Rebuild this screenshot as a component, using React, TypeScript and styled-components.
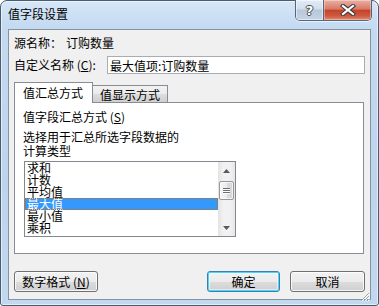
import React from "react";
import styled, { createGlobalStyle } from "styled-components";

const GlobalStyle = createGlobalStyle`
  html, body {
    margin: 0;
    padding: 0;
    background: #ffffff;
  }
  body {
    font-family: "Noto Sans CJK SC", "Noto Sans", sans-serif;
    font-size: 12px;
    color: #000;
  }
`;

const summaryTypes = ["求和", "计数", "平均值", "最大值", "最小值", "乘积"];
const selectedType = "最大值";

function ValueFieldSettings(): React.ReactElement {
    return (
        <Window>
            <TitleBar>
                <TitleText>值字段设置</TitleText>
                <CaptionButtons>
                    <HelpButton>?</HelpButton>
                    <CloseButton>
                        <svg width="16" height="12" viewBox="0 0 16 12">
                            <path d="M3 2 L13 10 M13 2 L3 10" stroke="#3a3a3a" strokeWidth="4.2" strokeLinecap="square" fill="none" />
                            <path d="M3 2 L13 10 M13 2 L3 10" stroke="#ffffff" strokeWidth="2.2" strokeLinecap="square" fill="none" />
                        </svg>
                    </CloseButton>
                </CaptionButtons>
            </TitleBar>
            <Client>
                <Row>
                    <FieldLabel $width={52}>源名称：</FieldLabel>
                    <span>订购数量</span>
                </Row>
                <Row $gap={4}>
                    <FieldLabel $width={93}>
                        自定义名称 (<Accel>C</Accel>):
                    </FieldLabel>
                    <NameInput readOnly defaultValue="最大值项:订购数量" />
                </Row>
                <Tabs>
                    <TabStrip>
                        <Tab $active $width={79}>值汇总方式</Tab>
                        <Tab $width={76}>值显示方式</Tab>
                    </TabStrip>
                    <TabPanel>
                        <SectionLabel>
                            值字段汇总方式 (<Accel>S</Accel>)
                        </SectionLabel>
                        <Hint>
                            选择用于汇总所选字段数据的
                            <br />
                            计算类型
                        </Hint>
                        <ListBox>
                            <ListItems>
                                {summaryTypes.map((t) => (
                                    <ListItem key={t} $selected={t === selectedType}>{t}</ListItem>
                                ))}
                            </ListItems>
                            <ScrollBar>
                                <ScrollArrow>
                                    <svg width="7" height="4" viewBox="0 0 7 4">
                                        <path d="M0 4 L3.5 0 L7 4 Z" fill="#5a5a5a" />
                                    </svg>
                                </ScrollArrow>
                                <ScrollThumb>
                                    <GripLine />
                                    <GripLine />
                                    <GripLine />
                                </ScrollThumb>
                                <TrackFill />
                                <ScrollArrow>
                                    <svg width="7" height="4" viewBox="0 0 7 4">
                                        <path d="M0 0 L7 0 L3.5 4 Z" fill="#5a5a5a" />
                                    </svg>
                                </ScrollArrow>
                            </ScrollBar>
                        </ListBox>
                    </TabPanel>
                </Tabs>
                <ButtonRow>
                    <PushButton $width={84}>
                        数字格式 (<Accel>N</Accel>)
                    </PushButton>
                    <Spacer />
                    <PushButton $width={73} $default>确定</PushButton>
                    <PushButton $width={75}>取消</PushButton>
                </ButtonRow>
                <SizeGrip>
                    <svg width="11" height="11" viewBox="0 0 11 11">
                        <path d="M10 2 L2 10 M10 5 L5 10 M10 8 L8 10" stroke="#ffffff" strokeWidth="1" fill="none" transform="translate(0.5 0.5)" />
                        <path d="M10 2 L2 10 M10 5 L5 10 M10 8 L8 10" stroke="#9aa3ad" strokeWidth="1" fill="none" />
                    </svg>
                </SizeGrip>
            </Client>
        </Window>
    );
}

const Window = styled.div`
    width: 379px;
    height: 306px;
    box-sizing: border-box;
    border: 1px solid #4b5c72;
    border-radius: 7px 7px 3px 3px;
    background: linear-gradient(180deg, #d6e6f7 0px, #c4daf1 26px, #bdd4ed 60%, #c2d8ef 100%);
    box-shadow: inset 0 0 0 1px rgba(255, 255, 255, 0.55);
    padding: 0 7px 5px 7px;
    display: flex;
    flex-direction: column;
`;

const TitleBar = styled.div`
    height: 28px;
    display: flex;
    align-items: flex-start;
    justify-content: space-between;
`;

const TitleText = styled.div`
    height: 26px;
    line-height: 26px;
    font-size: 12px;
    color: #000;
`;

const CaptionButtons = styled.div`
    display: flex;
    height: 20px;
    margin-top: -1px;
    margin-right: -1px;
    border: 1px solid #56667a;
    border-top: none;
    border-radius: 0 0 5px 5px;
    overflow: hidden;
    box-shadow: 0 1px 0 rgba(255, 255, 255, 0.6);
`;

const HelpButton = styled.div`
    width: 27px;
    height: 100%;
    border-right: 1px solid #56667a;
    background: linear-gradient(180deg, #e3ecf7 0%, #d0ddeb 45%, #b8c8db 50%, #c4d3e5 100%);
    box-shadow: inset 0 0 0 1px rgba(255, 255, 255, 0.5);
    display: flex;
    align-items: center;
    justify-content: center;
    font-family: "DejaVu Sans", sans-serif;
    font-weight: bold;
    font-size: 13px;
    color: #ffffff;
    text-shadow: -1px 0 #4a4a4a, 1px 0 #4a4a4a, 0 -1px #4a4a4a, 0 1px #4a4a4a;
`;

const CloseButton = styled.div`
    width: 47px;
    height: 100%;
    background: linear-gradient(180deg, #eab1a4 0%, #d97a66 45%, #c5432d 52%, #cf5a40 80%, #e08c70 100%);
    box-shadow: inset 0 0 0 1px rgba(255, 255, 255, 0.35);
    display: flex;
    align-items: center;
    justify-content: center;
`;

const Client = styled.div`
    position: relative;
    flex: 1;
    border: 1px solid #86929f;
    background: #f0f0f0;
    padding: 4px 5px 7px 5px;
    display: flex;
    flex-direction: column;
`;

const Row = styled.div<{ $gap?: number }>`
    display: flex;
    align-items: center;
    height: 18px;
    margin-top: ${(p) => p.$gap ?? 0}px;
    line-height: 14px;
`;

const FieldLabel = styled.span<{ $width: number }>`
    width: ${(p) => p.$width}px;
    flex-shrink: 0;
    white-space: nowrap;
`;

const Accel = styled.span`
    text-decoration: underline;
`;

const NameInput = styled.input`
    flex: 1;
    height: 18px;
    box-sizing: border-box;
    border: 1px solid #a9acb3;
    background: #fff;
    padding: 0 2px;
    margin: 0;
    font-family: inherit;
    font-size: 12px;
    color: #000;
    outline: none;
`;

const Tabs = styled.div`
    margin-top: 8px;
    margin-right: 1px;
    display: flex;
    flex-direction: column;
`;

const TabStrip = styled.div`
    display: flex;
    align-items: flex-end;
    height: 20px;
`;

const Tab = styled.div<{ $active?: boolean; $width: number }>`
    position: relative;
    z-index: ${(p) => (p.$active ? 2 : 1)};
    width: ${(p) => p.$width}px;
    height: ${(p) => (p.$active ? 21 : 17)}px;
    margin-bottom: ${(p) => (p.$active ? -1 : 0)}px;
    margin-left: ${(p) => (p.$active ? 0 : -1)}px;
    box-sizing: border-box;
    border: 1px solid #898c95;
    border-bottom: none;
    background: ${(p) => (p.$active ? "#ffffff" : "linear-gradient(180deg, #f2f2f2 0%, #ebebeb 50%, #dddddd 51%, #cfcfcf 100%)")};
    padding-left: ${(p) => (p.$active ? 8 : 7)}px;
    line-height: ${(p) => (p.$active ? 20 : 17)}px;
    white-space: nowrap;
`;

const TabPanel = styled.div`
    position: relative;
    z-index: 1;
    height: 152px;
    box-sizing: border-box;
    border: 1px solid #898c95;
    background: #ffffff;
    padding: 7px 8px;
`;

const SectionLabel = styled.div`
    line-height: 14px;
    white-space: nowrap;
`;

const Hint = styled.div`
    margin-top: 6px;
    line-height: 14px;
`;

const ListBox = styled.div`
    margin-top: 3px;
    margin-left: 1px;
    width: 212px;
    height: 76px;
    box-sizing: border-box;
    border: 1px solid #828790;
    background: #ffffff;
    display: flex;
`;

const ListItems = styled.div`
    flex: 1;
    overflow: hidden;
`;

const ListItem = styled.div<{ $selected?: boolean }>`
    height: 12px;
    line-height: 12px;
    padding-left: 2px;
    white-space: nowrap;
    background: ${(p) => (p.$selected ? "#3399ff" : "transparent")};
    color: ${(p) => (p.$selected ? "#ffffff" : "#000000")};
    outline: ${(p) => (p.$selected ? "1px dotted #cc6600" : "none")};
    outline-offset: -1px;
`;

const ScrollBar = styled.div`
    width: 17px;
    display: flex;
    flex-direction: column;
    background: linear-gradient(90deg, #e3e3e3 0%, #f1f1f1 30%, #f1f1f1 70%, #e6e6e6 100%);
`;

const ScrollArrow = styled.div`
    height: 17px;
    display: flex;
    align-items: center;
    justify-content: center;
    flex-shrink: 0;
`;

const ScrollThumb = styled.div`
    margin: 2px 1px 0 1px;
    height: 19px;
    box-sizing: border-box;
    border: 1px solid #979797;
    border-radius: 2px;
    background: linear-gradient(90deg, #f5f5f5 0%, #ececec 50%, #dcdcdc 51%, #d6d6d6 100%);
    box-shadow: inset 0 0 0 1px rgba(255, 255, 255, 0.7);
    display: flex;
    flex-direction: column;
    align-items: center;
    justify-content: center;
    gap: 1px;
`;

const GripLine = styled.div`
    width: 7px;
    height: 1px;
    background: #6e6e6e;
    box-shadow: 0 1px 0 #ffffff;
`;

const TrackFill = styled.div`
    flex: 1;
`;

const ButtonRow = styled.div`
    margin-top: 17px;
    display: flex;
    gap: 10px;
`;

const Spacer = styled.div`
    flex: 1;
`;

const PushButton = styled.div<{ $width: number; $default?: boolean }>`
    width: ${(p) => p.$width}px;
    height: 21px;
    box-sizing: border-box;
    border: 1px solid ${(p) => (p.$default ? "#3c7fb1" : "#707070")};
    border-radius: 3px;
    background: linear-gradient(180deg, #f2f2f2 0%, #ebebeb 50%, #dddddd 51%, #cfcfcf 100%);
    box-shadow: ${(p) => (p.$default ? "inset 0 0 0 1px #48d7fb, inset 0 0 0 2px rgba(255,255,255,0.5)" : "inset 0 0 0 1px rgba(255,255,255,0.8)")};
    display: flex;
    align-items: center;
    justify-content: center;
    line-height: 14px;
    white-space: nowrap;
`;

const SizeGrip = styled.div`
    position: absolute;
    right: 0;
    bottom: 0;
    width: 11px;
    height: 11px;
`;

export default function App(): React.ReactElement {
    return (
        <>
            <GlobalStyle />
            <ValueFieldSettings />
        </>
    );
}
